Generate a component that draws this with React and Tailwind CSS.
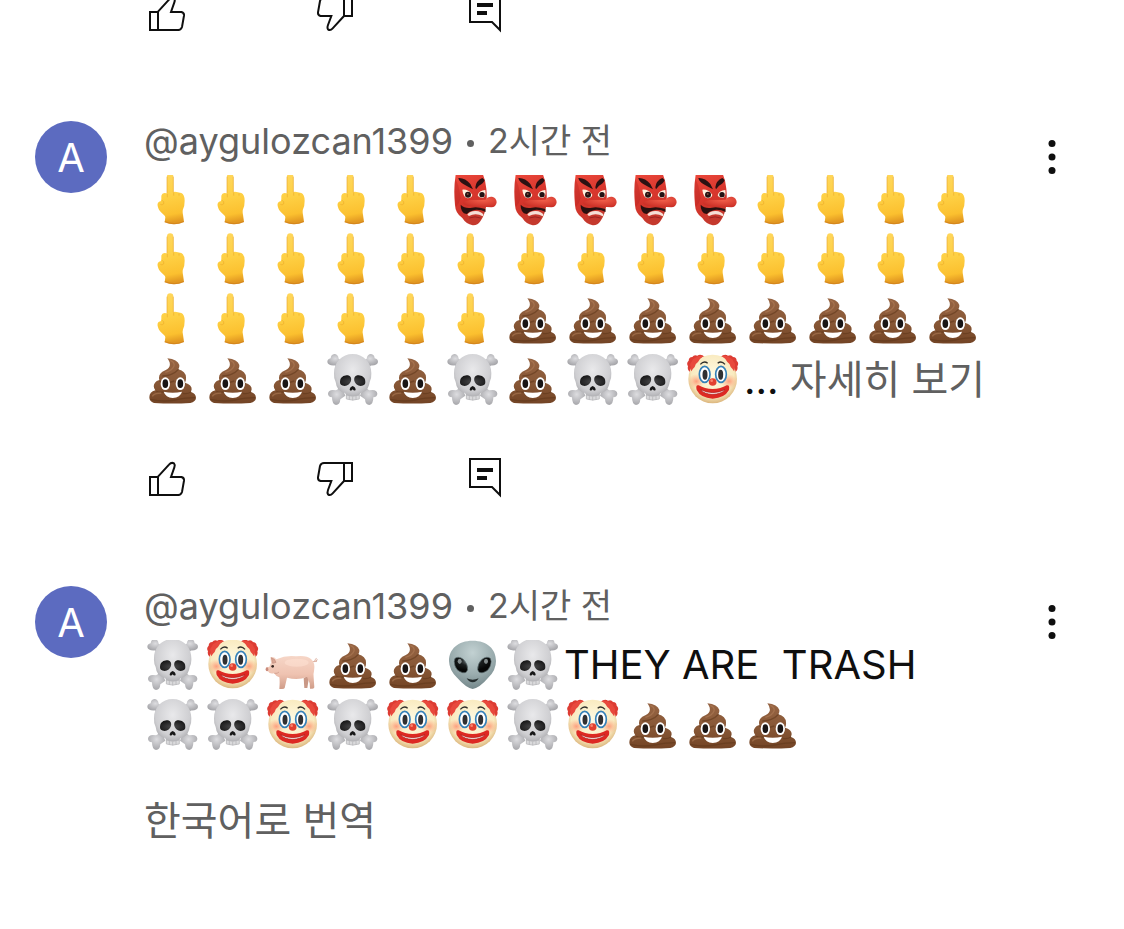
import React from "react";

const LABELS = {
  finger: "🖕",
  tengu: "👺",
  poop: "💩",
  skull: "☠️",
  clown: "🤡",
  pig: "🐖",
  alien: "👽",
};

function EmojiSheet() {
  return (
    <svg className="absolute h-0 w-0" aria-hidden="true">
      <defs>
        <linearGradient id="gFinger" x1="0" y1="0" x2="0.1" y2="1">
          <stop offset="0" stopColor="#ffd75e" />
          <stop offset="0.5" stopColor="#fed044" />
          <stop offset="0.85" stopColor="#fbc02f" />
          <stop offset="1" stopColor="#e39a22" />
        </linearGradient>
        <linearGradient id="gTengu" x1="0" y1="0" x2="0.3" y2="1">
          <stop offset="0" stopColor="#ee4a3d" />
          <stop offset="0.6" stopColor="#d5342b" />
          <stop offset="1" stopColor="#c4392d" />
        </linearGradient>
        <radialGradient id="gNose" cx="0.6" cy="0.3" r="0.7">
          <stop offset="0" stopColor="#f25f4b" />
          <stop offset="1" stopColor="#cb2f26" />
        </radialGradient>
        <linearGradient id="gPoop" x1="0" y1="0" x2="0" y2="1">
          <stop offset="0" stopColor="#976544" />
          <stop offset="0.6" stopColor="#855534" />
          <stop offset="1" stopColor="#734425" />
        </linearGradient>
        <radialGradient id="gSkull" cx="0.5" cy="0.35" r="0.65">
          <stop offset="0" stopColor="#e9e9eb" />
          <stop offset="0.7" stopColor="#cfcfd2" />
          <stop offset="1" stopColor="#a2a2a6" />
        </radialGradient>
        <radialGradient id="gBone" cx="0.5" cy="0.4" r="0.6">
          <stop offset="0" stopColor="#dddde0" />
          <stop offset="1" stopColor="#a6a6aa" />
        </radialGradient>
        <radialGradient id="gSocket" cx="0.5" cy="0.6" r="0.6">
          <stop offset="0" stopColor="#4a4a4c" />
          <stop offset="1" stopColor="#171718" />
        </radialGradient>
        <radialGradient id="gClown" cx="0.5" cy="0.42" r="0.58">
          <stop offset="0" stopColor="#fffbe4" />
          <stop offset="0.75" stopColor="#f9eabf" />
          <stop offset="1" stopColor="#dcb67d" />
        </radialGradient>
        <radialGradient id="gBlush">
          <stop offset="0" stopColor="#ff7558" stopOpacity="0.65" />
          <stop offset="1" stopColor="#ff9a70" stopOpacity="0" />
        </radialGradient>
        <linearGradient id="gPig" x1="0" y1="0" x2="0" y2="1">
          <stop offset="0" stopColor="#f6d6c7" />
          <stop offset="0.55" stopColor="#efc3b1" />
          <stop offset="1" stopColor="#cf9c88" />
        </linearGradient>
        <radialGradient id="gAlien" cx="0.5" cy="0.25" r="0.75">
          <stop offset="0" stopColor="#c2d1d2" />
          <stop offset="0.6" stopColor="#9aacae" />
          <stop offset="1" stopColor="#74878a" />
        </radialGradient>
        <radialGradient id="gAlienEye" cx="0.45" cy="0.28" r="0.55">
          <stop offset="0" stopColor="#7e898b" />
          <stop offset="0.5" stopColor="#1b1f20" />
          <stop offset="1" stopColor="#060707" />
        </radialGradient>
      </defs>

      <symbol id="finger" viewBox="12 0 180 180">
        <path
          d="M81 70V20a9.500 10 0 0 1 19 0V66Q104 64 110 66L124 69Q134 74 134 92Q134 108 129 118Q127 124 129 134L132 156Q103 169 74 157L76 142Q76 137 71 134Q57 124 54 112Q50 99 57 95Q63 95 64 90V77Q66 69 73 69Z"
          fill="url(#gFinger)"
        />
        <path d="M81 70V20M100 67V20" stroke="#eaa92e" strokeWidth="2" fill="none" />
        <path d="M65 90Q74 94 71 102Q66 107 61 103M82 72V82M101 68V77M117 70V77" stroke="#e5a126" strokeWidth="2.500" fill="none" opacity="0.55" />
        <path d="M74 153Q103 165 131 153L132 156Q103 169 74 157Z" fill="#c87417" opacity="0.5" />
      </symbol>

      <symbol id="tengu" viewBox="12 0 180 180">
        <path
          d="M47 14Q88 -2 129 14Q137 32 139 56Q142 86 138 112Q133 138 121 154Q113 167 98 166Q78 162 67 144Q46 130 45 105Q40 56 47 14Z"
          fill="url(#gTengu)"
        />
        <path d="M46 28Q56 40 62 84Q58 100 48 111Q41 60 46 28Z" fill="#a91d1e" opacity="0.3" />
        <path d="M55 24Q76 23 91 42L99 58Q83 50 71 43Q58 36 55 24ZM106 52Q108 32 127 24L134 30Q130 41 117 47L108 58Z" fill="#2a1213" />
        <path d="M67 59Q84 57 97 74Q96 84 83 85Q69 81 67 59ZM113 76Q117 61 136 60Q139 78 129 84Q117 84 113 76Z" fill="#fff0df" />
        <circle cx="84" cy="74" r="9" fill="#231112" />
        <circle cx="126" cy="74" r="8" fill="#231112" />
        <circle cx="83" cy="72" r="3" fill="#7a4a3c" />
        <path d="M62 104Q75 117 96 113Q110 109 136 117L137 126Q120 118 104 120Q88 123 80 132Q61 129 62 104Z" fill="#28100f" />
        <path d="M82 134Q90 122 108 123Q124 124 131 135L128 139Q108 127 87 138Z" fill="#f6dfd5" />
        <path d="M88 144Q105 137 122 144" stroke="#9c2320" strokeWidth="3" fill="none" />
        <path d="M92 90Q115 90 136 89Q143 79 156 80Q170 84 170 97Q168 112 154 112Q139 110 130 110Q110 112 90 108Q72 106 68 98Q80 89 92 90Z" fill="url(#gNose)" />
      </symbol>

      <symbol id="poop" viewBox="12 0 180 180">
        <path
          d="M82 25Q113 28 118 45Q119 52 115 58Q137 64 138 82Q139 92 135 98Q156 104 155 118Q154 122 153 126Q168 131 168 144Q167 155 151 159Q98 162 42 159Q28 155 28 142Q28 126 46 121Q37 108 45 98Q49 92 58 90Q54 74 67 65Q87 57 89 48Q92 38 82 25Z"
          fill="url(#gPoop)"
        />
        <path d="M67 78Q97 78 116 58M58 93Q76 103 103 93M135 98Q130 103 122 104M49 124Q62 130 72 124M153 126Q142 133 128 130M31 148Q70 157 105 150T165 143" stroke="#5f3619" strokeWidth="4" fill="none" opacity="0.55" />
        <path d="M91 31Q105 37 102 48Q98 61 76 67M64 129Q42 129 37 139" stroke="#b5815c" strokeWidth="4" fill="none" opacity="0.5" />
        <ellipse cx="76" cy="101" rx="14" ry="19" fill="#fff" />
        <ellipse cx="121" cy="101" rx="14" ry="19" fill="#fff" />
        <ellipse cx="76" cy="101" rx="8.500" ry="13" fill="#191515" />
        <ellipse cx="121" cy="101" rx="8.500" ry="13" fill="#191515" />
        <path d="M71 125Q98 131 126 125Q121 143 98 144Q77 143 71 125Z" fill="#fff" />
      </symbol>

      <symbol id="skull" viewBox="12 0 180 180">
        <path d="M46 35L146 134M152 35L51 134" stroke="#b6b6ba" strokeWidth="18" />
        <path d="M60 42L46 46Q24 48 22 36Q22 27 32 25Q33 13 43 12Q54 12 56 26L70 35Z" fill="url(#gBone)" />
        <path d="M136 42L150 46Q172 48 174 36Q174 27 164 25Q163 13 153 12Q142 12 140 26L126 35Z" fill="url(#gBone)" />
        <path d="M66 112L48 121Q26 116 24 131Q24 140 36 142Q36 163 48 165Q60 165 61 148L76 137Z" fill="url(#gBone)" />
        <path d="M130 112L148 121Q170 116 172 131Q172 140 160 142Q160 163 148 165Q136 165 135 148L120 137Z" fill="url(#gBone)" />
        <path
          d="M98 12C66 12 42 36 42 70Q41 85 47 96Q48 108 55 118Q64 127 75 129Q80 134 80 145Q98 153 117 145Q117 133 122 129Q139 125 143 115Q148 106 149 96Q155 84 154 70C154 36 130 12 98 12Z"
          fill="url(#gSkull)"
        />
        <path d="M63 84Q70 74 84 76Q96 80 93 93Q88 106 74 108Q59 107 60 96Q60 89 63 84ZM133 84Q126 74 112 76Q100 80 103 93Q108 106 122 108Q137 107 136 96Q136 89 133 84Z" fill="url(#gSocket)" />
        <path d="M98 108Q107 111 107 120Q102 124 98 118Q94 124 89 120Q89 111 98 108Z" fill="#171718" />
        <path d="M79 135Q98 143 118 135V147Q98 154 79 147Z" fill="#dadadc" stroke="#b3b3b6" strokeWidth="2" />
        <path d="M88 138V149M98 140V151M108 138V149" stroke="#b0b0b3" strokeWidth="2" />
      </symbol>

      <symbol id="clown" viewBox="12 0 180 180">
        <path d="M74 20Q62 11 52 17Q42 13 37 21Q26 22 26 32Q18 39 24 49Q21 59 29 65Q34 72 44 62ZM122 20Q134 11 144 17Q154 13 159 21Q170 22 170 32Q178 39 172 49Q175 59 167 65Q162 72 152 62Z" fill="#dd3c33" />
        <circle cx="98" cy="87" r="73" fill="url(#gClown)" />
        <path d="M70 18Q54 16 46 23Q37 26 35 35Q28 42 32 50Q30 58 34 64Q38 56 44 51Q46 40 54 36Q59 26 70 18ZM126 18Q142 16 150 23Q159 26 161 35Q168 42 164 50Q166 58 162 64Q158 56 152 51Q150 40 142 36Q137 26 126 18Z" fill="#e8493d" />
        <ellipse cx="49" cy="94" rx="25" ry="22" fill="url(#gBlush)" />
        <ellipse cx="147" cy="94" rx="25" ry="22" fill="url(#gBlush)" />
        <path d="M61 43Q72 31 83 40M113 40Q124 31 135 43" stroke="#30302c" strokeWidth="4" fill="none" />
        <ellipse cx="74" cy="73" rx="16" ry="24" fill="#fff" stroke="#3581b8" strokeWidth="5" />
        <ellipse cx="123" cy="73" rx="16" ry="24" fill="#fff" stroke="#3581b8" strokeWidth="5" />
        <ellipse cx="75" cy="74" rx="7.500" ry="15" fill="#303032" />
        <ellipse cx="122" cy="74" rx="7.500" ry="15" fill="#303032" />
        <path d="M56 106Q46 103 50 120Q62 144 98 146Q134 144 147 120Q150 103 140 106Q122 117 98 117Q74 117 56 106Z" fill="#dd2923" />
        <path d="M62 119Q98 137 135 119Q124 132 98 133Q72 132 62 119Z" fill="#fff" stroke="#a81d1a" strokeWidth="2" />
        <circle cx="98" cy="96" r="11.500" fill="#e2402f" />
        <circle cx="95" cy="92" r="4" fill="#f9856e" />
      </symbol>

      <symbol id="pig" viewBox="12 0 180 180">
        <path d="M60 129L64 159H72L78 126ZM131 129L133 159H142L148 121Z" fill="#c99886" />
        <path d="M158 80Q169 82 172 74Q169 67 164 75Q165 80 171 79" stroke="#ddb0a0" strokeWidth="3" fill="none" />
        <path
          d="M33 83L31 67Q42 64 49 73Q78 60 108 64Q140 60 153 72Q167 83 162 109Q159 119 161 128L163 157Q163 161 157 161H150L149 145L141 125Q115 137 81 128L74 159Q73 162 66 162H58Q60 139 58 127Q47 123 42 115Q29 118 24 109Q17 108 18 99Q20 96 28 95Z"
          fill="url(#gPig)"
        />
        <ellipse cx="110" cy="83" rx="36" ry="12" fill="#ffe4d6" opacity="0.5" />
        <path d="M34 68Q46 72 48 82L38 85Z" fill="#d8a594" stroke="#c38c7b" strokeWidth="2" />
        <path d="M43 115Q52 117 57 111" fill="none" stroke="#c99483" strokeWidth="2" />
        <circle cx="38" cy="94" r="4" fill="#382722" />
        <ellipse cx="21" cy="103" rx="4" ry="6" fill="#c98b7c" />
      </symbol>

      <symbol id="alien" viewBox="12 0 180 180">
        <path d="M98 17C54 17 27 42 27 78Q28 105 50 127Q78 159 98 162Q119 159 146 127Q168 105 168 78C168 42 142 17 98 17Z" fill="url(#gAlien)" />
        <path d="M45 70Q56 62 70 73Q84 86 83 104Q79 116 67 113Q50 109 45 93Q40 78 45 70ZM151 70Q140 62 126 73Q112 86 113 104Q117 116 129 113Q146 109 151 93Q156 78 151 70Z" fill="url(#gAlienEye)" stroke="#66797b" strokeWidth="2" />
        <ellipse cx="59" cy="79" rx="6" ry="8" fill="#bdc8ca" opacity="0.65" />
        <ellipse cx="138" cy="79" rx="6" ry="8" fill="#bdc8ca" opacity="0.65" />
        <path d="M80 130Q98 138 116 130Q109 142 98 142Q87 142 80 130Z" fill="#252d2e" />
      </symbol>
    </svg>
  );
}

function Emojis({ list }) {
  return list.flatMap(([name, count], group) =>
    Array.from({ length: count }, (_, i) => (
      <svg key={`${group}-${i}`} role="img" aria-label={LABELS[name]} className="h-[60px] w-[60px] shrink-0">
        <use href={`#${name}`} />
      </svg>
    ))
  );
}

function Actions() {
  return (
    <div className="flex shrink-0 pl-36 text-[#0f0f0f]">
      <button type="button" aria-label="좋아요" className="mr-[125px] h-10 w-11">
        <svg viewBox="12 24 132 120" className="h-10 w-11" fill="none" stroke="currentColor" strokeWidth="6">
          <path d="M54 80L87 44Q94 36 102 40Q106 44 103 52L93 81H124Q133 83 132 92L126 126Q123 135 115 135H30V81H54V135" />
        </svg>
      </button>
      <button type="button" aria-label="싫어요" className="mr-[106px] h-10 w-11">
        <svg viewBox="519 24 132 120" className="h-10 w-11" fill="none" stroke="currentColor" strokeWidth="6">
          <path d="M612 93L578 130Q571 138 564 133Q561 128 564 120L574 93H542Q533 91 534 82L540 48Q543 39 552 39H636V93H612V39" />
        </svg>
      </button>
      <button type="button" aria-label="답글" className="h-10 w-11">
        <svg viewBox="969 24 132 120" className="h-10 w-11" fill="none" stroke="currentColor" strokeWidth="6">
          <path d="M990 27H1080V135L1056 111H990Z" />
          <path d="M1011 60H1059M1011 84H1041" strokeWidth="12" />
        </svg>
      </button>
    </div>
  );
}

function Comment({ children, footer }) {
  return (
    <article className="pt-[88px]">
      <div className="flex items-start pr-[50px]">
        <div className="flex w-36 shrink-0 pl-[35px]">
          <div className="flex h-[72px] w-[72px] items-center justify-center rounded-full bg-[#5c6bc0] pt-0.5 text-[40px] leading-none text-white">
            A
          </div>
        </div>
        <div className="min-w-0 flex-1">
          <header className="flex h-10 items-center text-[36px] leading-10 text-[#606060]">
            <a href="#channel">@aygulozcan1399</a>
            <span className="mx-[14px] mt-1 h-[7px] w-[7px] rounded-full bg-[#606060]" />
            <time className="text-[34px]">2시간 전</time>
          </header>
          <div className="mt-[14px] overflow-hidden">
            <div className="-mt-[5px] text-[40px] leading-[60px]">{children}</div>
          </div>
        </div>
        <button type="button" aria-label="작업 메뉴" className="flex h-[72px] w-11 shrink-0 items-center justify-center">
          <svg viewBox="0 0 12 36" className="h-9 w-3" fill="#0f0f0f">
            <circle cx="6" cy="4.500" r="3.500" />
            <circle cx="6" cy="18" r="3.500" />
            <circle cx="6" cy="31.500" r="3.500" />
          </svg>
        </button>
      </div>
      {footer}
    </article>
  );
}

export default function App() {
  return (
    <main className="min-h-screen overflow-hidden bg-white font-['Inter','Noto_Sans_CJK_KR',sans-serif] text-[#0f0f0f]">
      <EmojiSheet />
      <div className="flex h-[33px] flex-col justify-end overflow-hidden">
        <Actions />
      </div>

      <Comment footer={<div className="mt-12"><Actions /></div>}>
        <div className="flex flex-wrap">
          <Emojis
            list={[
              ["finger", 5], ["tengu", 5], ["finger", 4],
              ["finger", 14],
              ["finger", 6], ["poop", 8],
              ["poop", 3], ["skull", 1], ["poop", 1], ["skull", 1], ["poop", 1], ["skull", 2], ["clown", 1],
            ]}
          />
          <span className="whitespace-pre">... </span>
          <button type="button" className="text-[#606060]">자세히 보기</button>
        </div>
      </Comment>

      <Comment
        footer={
          <div className="mt-[42px] pl-36">
            <button type="button" className="text-[40px] leading-[48px] text-[#606060]">한국어로 번역</button>
          </div>
        }
      >
        <div className="flex flex-wrap">
          <Emojis list={[["skull", 1], ["clown", 1], ["pig", 1], ["poop", 2], ["alien", 1], ["skull", 1]]} />
          <span className="whitespace-pre">THEY ARE  TRASH</span>
        </div>
        <div className="flex flex-wrap">
          <Emojis list={[["skull", 2], ["clown", 1], ["skull", 1], ["clown", 2], ["skull", 1], ["clown", 1], ["poop", 3]]} />
        </div>
      </Comment>
    </main>
  );
}
